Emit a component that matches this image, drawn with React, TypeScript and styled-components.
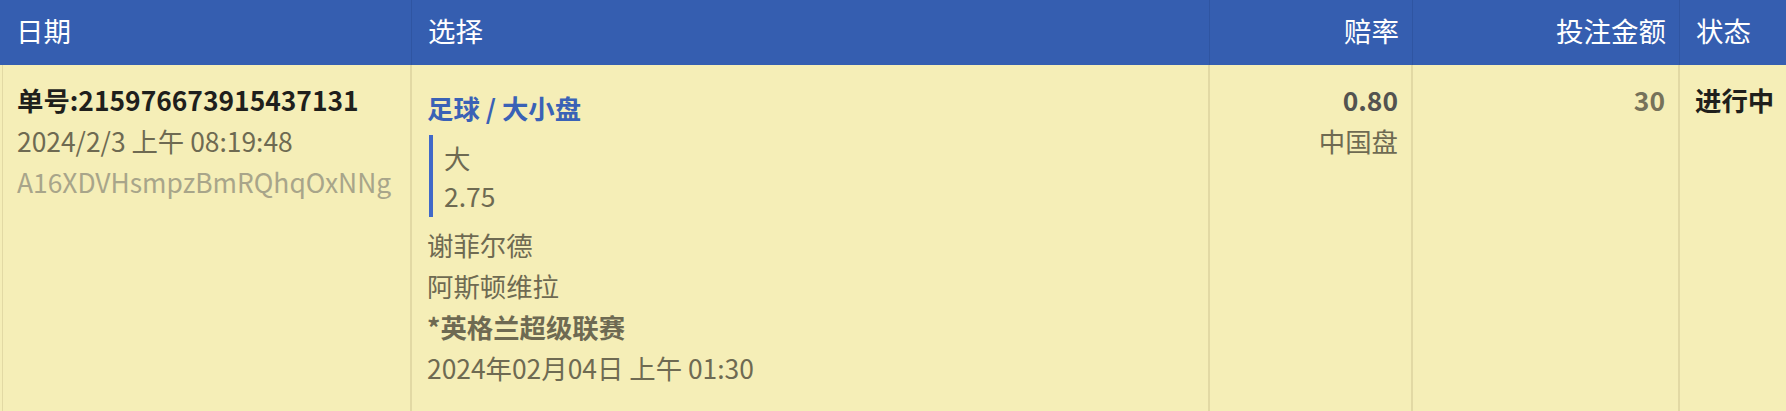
import React from "react";
import styled, { createGlobalStyle } from "styled-components";

const GlobalStyle = createGlobalStyle`
  html, body { margin: 0; padding: 0; background: #ffffff; }
  body { font-family: "Noto Sans CJK SC", "Noto Sans", sans-serif; }
`;

const COLS = "412px 798px 203px 267px 1fr";

const Table = styled.div`
  width: 1786px;
  display: flex;
  flex-direction: column;
`;

const HeadRow = styled.div`
  display: grid;
  grid-template-columns: ${COLS};
  height: 65px;
  background: #355eb0;
`;

const HeadCell = styled.div<{ $align?: "left" | "right" }>`
  display: flex;
  align-items: center;
  justify-content: ${(p) => (p.$align === "right" ? "flex-end" : "flex-start")};
  padding: 0 13px 3px 16px;
  border-right: 1px solid #2f55a2;
  color: #ffffff;
  font-size: 27.5px;
  line-height: 1;
  white-space: nowrap;
  &:last-child { border-right: none; }
`;

const BodyRow = styled.div`
  display: grid;
  grid-template-columns: ${COLS};
  background: #f5eeb7;
  min-height: 346px;
`;

const Cell = styled.div<{ $align?: "left" | "right"; $first?: boolean }>`
  display: flex;
  flex-direction: column;
  align-items: ${(p) => (p.$align === "right" ? "flex-end" : "flex-start")};
  padding: 14px 13px 14px ${(p) => (p.$first ? "14px" : "15px")};
  border-right: 2px solid #e2d9a4;
  ${(p) => (p.$first ? "border-left: 1px solid #e2d9a4; margin-left: 2px;" : "")}
  font-size: 26.4px;
  line-height: 41px;
  color: #6e6a52;
  white-space: nowrap;
  &:last-child { border-right: none; }
`;

const OrderNo = styled.div`
  font-weight: 700;
  color: #1f1f1c;
`;

const DateText = styled.div`
  color: #6e6a52;
`;

const TxId = styled.div`
  color: #a8a58a;
`;

const MarketTitle = styled.div`
  margin-top: 8px;
  font-weight: 700;
  color: #3a62b6;
`;

const Selection = styled.div`
  margin: 7px 0 7px 2px;
  padding: 4px 0 2px 11px;
  border-left: 4px solid #4169c8;
  line-height: 38px;
  color: #6e6a52;
`;

const Team = styled.div`
  color: #6e6a52;
`;

const League = styled.div`
  font-weight: 700;
  color: #6e6a52;
`;

const Odds = styled.div`
  font-weight: 700;
  color: #535350;
`;

const Stake = styled.div`
  font-weight: 700;
  color: #76725a;
`;

const Status = styled.div`
  font-weight: 700;
  color: #1f1f1c;
`;

export default function App() {
  return (
    <>
      <GlobalStyle />
      <Table>
        <HeadRow>
          <HeadCell>日期</HeadCell>
          <HeadCell>选择</HeadCell>
          <HeadCell $align="right">赔率</HeadCell>
          <HeadCell $align="right">投注金额</HeadCell>
          <HeadCell>状态</HeadCell>
        </HeadRow>
        <BodyRow>
          <Cell $first>
            <OrderNo>单号:215976673915437131</OrderNo>
            <DateText>2024/2/3 上午 08:19:48</DateText>
            <TxId>A16XDVHsmpzBmRQhqOxNNg</TxId>
          </Cell>
          <Cell>
            <MarketTitle>足球 / 大小盘</MarketTitle>
            <Selection>
              <div>大</div>
              <div>2.75</div>
            </Selection>
            <Team>谢菲尔德</Team>
            <Team>阿斯顿维拉</Team>
            <League>*英格兰超级联赛</League>
            <DateText>2024年02月04日 上午 01:30</DateText>
          </Cell>
          <Cell $align="right">
            <Odds>0.80</Odds>
            <DateText>中国盘</DateText>
          </Cell>
          <Cell $align="right">
            <Stake>30</Stake>
          </Cell>
          <Cell>
            <Status>进行中</Status>
          </Cell>
        </BodyRow>
      </Table>
    </>
  );
}
